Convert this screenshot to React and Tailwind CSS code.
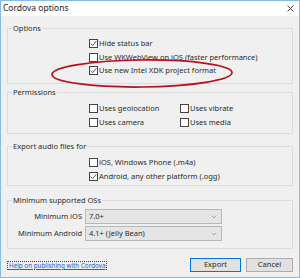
import { ChevronDown } from 'lucide-react'

function Check({ checked, label }) {
  return (
    <div className="flex items-center h-[13.5px]">
      <span className="w-[9px] h-[9px] border border-[#444] bg-white flex items-center justify-center shrink-0">
        {checked && (
          <svg width="7" height="7" viewBox="0 0 7 7">
            <path d="M0.8 3.6 L2.7 5.6 L6.3 1.2" fill="none" stroke="#444" strokeWidth="0.9" />
          </svg>
        )}
      </span>
      <span className="ml-[1px] whitespace-nowrap">{label}</span>
    </div>
  )
}

function Group({ title, className, children }) {
  return (
    <div className={`relative border border-[#dcdcdc] ${className}`}>
      <span className="absolute -top-[7px] left-[4px] bg-[#f0f0f0] px-[1px] leading-[12px]">{title}</span>
      {children}
    </div>
  )
}

function Select({ value }) {
  return (
    <div className="w-[137px] h-[15px] border border-[#b8b8b8] bg-[#e5e5e5] flex items-center justify-between pl-[3px] pr-[3px]">
      <span>{value}</span>
      <ChevronDown size={8} strokeWidth={1.5} className="text-[#666]" />
    </div>
  )
}

export default function App() {
  return (
    <div className="w-[300px] h-[278px] border border-[#86bde6] bg-[#f0f0f0] text-[7.5px] text-[#2b2b2b] font-['Noto_Sans',sans-serif] flex flex-col overflow-hidden">
      {/* title bar */}
      <div className="h-[15px] bg-white flex items-center justify-between pl-[2px] pr-[5px] shrink-0">
        <span className="text-[8.5px] text-[#222]">Cordova options</span>
        <svg width="7" height="7" viewBox="0 0 7 7">
          <path d="M0.5 0.5 L6.5 6.5 M6.5 0.5 L0.5 6.5" stroke="#333" strokeWidth="0.9" />
        </svg>
      </div>

      <div className="relative px-[6px] pt-[12px]">
        <Group title="Options" className="h-[56px] pt-[8px] pl-[81px]">
          <Check checked label="Hide status bar" />
          <Check label="Use WKWebView on iOS (faster performance)" />
          <Check checked label="Use new Intel XDK project format" />
        </Group>

        <Group title="Permissions" className="mt-[8px] h-[42px] pt-[9px] pl-[81px]">
          <div className="grid grid-cols-[91px_auto]">
            <Check label="Uses geolocation" />
            <Check label="Uses vibrate" />
            <Check label="Uses camera" />
            <Check label="Uses media" />
          </div>
        </Group>

        <Group title="Export audio files for" className="mt-[12px] h-[40px] pt-[9px] pl-[81px]">
          <Check label="iOS, Windows Phone (.m4a)" />
          <Check checked label="Android, any other platform (.ogg)" />
        </Group>

        <Group title="Minimum supported OSs" className="mt-[14px] h-[49px] pt-[8px]">
          <div className="flex items-center">
            <span className="w-[77px] text-right pr-[3px]">Minimum iOS</span>
            <Select value="7.0+" />
          </div>
          <div className="flex items-center mt-[2px]">
            <span className="w-[77px] text-right pr-[3px]">Minimum Android</span>
            <Select value="4.1+ (Jelly Bean)" />
          </div>
        </Group>

        {/* footer */}
        <div className="flex items-center justify-between mt-[9px]">
          <span className="border border-dotted border-[#444] px-[1px] leading-[7px] text-[6.3px] text-[#2a5bd0] underline">
            Help on publishing with Cordova
          </span>
          <div className="flex gap-[5px]">
            <button className="w-[51px] h-[14px] border border-[#0078d7] bg-[#e1e1e1] leading-none">Export</button>
            <button className="w-[47px] h-[14px] border border-[#adadad] bg-[#e1e1e1] leading-none">Cancel</button>
          </div>
        </div>

        {/* red annotation ellipse */}
        <svg className="absolute left-0 top-0 pointer-events-none" width="298" height="100" viewBox="0 0 298 100">
          <ellipse cx="141" cy="57.5" rx="90" ry="13.5" fill="none" stroke="#b8101c" strokeWidth="1.7" transform="rotate(-0.6 141 57.5)" />
        </svg>
      </div>
    </div>
  )
}
